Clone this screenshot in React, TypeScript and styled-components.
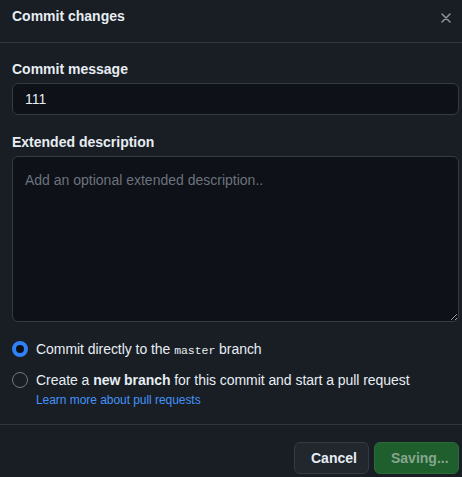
import React from "react";
import styled, { createGlobalStyle } from "styled-components";

const Global = createGlobalStyle`
  html, body { margin: 0; padding: 0; background: #191d24; }
  body { font-family: "Liberation Sans", Arial, sans-serif; color: #e6edf3; }
  * { box-sizing: border-box; }
`;

const Dialog = styled.div`
  width: 462px;
  height: 477px;
  background: #191d24;
  display: flex;
  flex-direction: column;
  overflow: hidden;
`;

const Header = styled.div`
  height: 43px;
  border-bottom: 1px solid #30363d;
  display: flex;
  align-items: flex-start;
  justify-content: space-between;
  padding: 6px 6px 0 12px;
`;

const Title = styled.h1`
  margin: 0;
  font-size: 14px;
  font-weight: 700;
  line-height: 20px;
  color: #e6edf3;
`;

const CloseButton = styled.button`
  width: 20px;
  height: 20px;
  margin-top: 2px;
  border: 0;
  background: transparent;
  padding: 0;
  display: flex;
  align-items: center;
  justify-content: center;
  color: #8d96a0;
`;

const Body = styled.div`
  padding: 16px 3px 0 12px;
  display: flex;
  flex-direction: column;
`;

const Label = styled.label<{ $top?: number }>`
  font-size: 14px;
  font-weight: 700;
  line-height: 20px;
  color: #e6edf3;
  margin-top: ${(p) => p.$top ?? 0}px;
  margin-bottom: 4px;
`;

const Input = styled.input`
  height: 32px;
  width: 100%;
  background: #0e1117;
  border: 1px solid #353b44;
  border-radius: 6px;
  padding: 0 12px;
  font-family: inherit;
  font-size: 14px;
  color: #e6edf3;
  outline: none;
`;

const TextArea = styled.textarea`
  height: 166px;
  width: 100%;
  background: #0e1117;
  border: 1px solid #353b44;
  border-radius: 6px;
  padding: 13px 12px;
  font-family: inherit;
  font-size: 14px;
  line-height: 20px;
  color: #e6edf3;
  outline: none;
  resize: vertical;
  color-scheme: dark;
  &::placeholder { color: #6b737d; }
`;

const Options = styled.div`
  margin-top: 17px;
  display: flex;
  flex-direction: column;
  gap: 9px;
`;

const Option = styled.div`
  display: flex;
  align-items: flex-start;
  gap: 8px;
`;

const Radio = styled.span<{ $checked?: boolean }>`
  width: 16px;
  height: 16px;
  margin-top: 2px;
  flex: none;
  border-radius: 50%;
  border: ${(p) => (p.$checked ? "4px solid #2f81f7" : "1px solid #6e7681")};
  background: ${(p) => (p.$checked ? "#0d1117" : "transparent")};
`;

const OptionText = styled.div`
  display: flex;
  flex-direction: column;
  font-size: 14px;
  line-height: 20px;
  color: #e6edf3;
  letter-spacing: -0.05px;
`;

const Code = styled.code`
  font-family: "Liberation Mono", "DejaVu Sans Mono", monospace;
  font-size: 11.5px;
`;

const Link = styled.a`
  font-size: 12px;
  line-height: 18px;
  color: #4493f8;
  text-decoration: none;
  margin-top: 1px;
`;

const Footer = styled.div`
  margin-top: 15px;
  border-top: 1px solid #30363d;
  padding: 17px 3px 0 12px;
  display: flex;
  justify-content: flex-end;
  gap: 5px;
`;

const Button = styled.button<{ $primary?: boolean }>`
  height: 32px;
  padding: 0 16px;
  border-radius: 6px;
  font-family: inherit;
  font-size: 14px;
  font-weight: 700;
  border: 1px solid ${(p) => (p.$primary ? "#2b6a39" : "#363b43")};
  background: ${(p) => (p.$primary ? "#1f5f2e" : "#22262d")};
  color: ${(p) => (p.$primary ? "#86a68d" : "#e6edf3")};
  width: ${(p) => (p.$primary ? "85px" : "75px")};
`;

export default function App() {
  return (
    <>
      <Global />
      <Dialog>
        <Header>
          <Title>Commit changes</Title>
          <CloseButton aria-label="Close">
            <svg width="10" height="10" viewBox="0 0 10 10">
              <path d="M1 1L9 9M9 1L1 9" stroke="currentColor" strokeWidth="1.5" strokeLinecap="round" />
            </svg>
          </CloseButton>
        </Header>
        <Body>
          <Label>Commit message</Label>
          <Input defaultValue="111" />
          <Label $top={17}>Extended description</Label>
          <TextArea placeholder="Add an optional extended description.." />
          <Options>
            <Option>
              <Radio $checked />
              <OptionText>
                <span>
                  Commit directly to the <Code>master</Code> branch
                </span>
              </OptionText>
            </Option>
            <Option>
              <Radio />
              <OptionText>
                <span>
                  Create a <b>new branch</b> for this commit and start a pull request
                </span>
                <Link href="#">Learn more about pull requests</Link>
              </OptionText>
            </Option>
          </Options>
        </Body>
        <Footer>
          <Button>Cancel</Button>
          <Button $primary>Saving...</Button>
        </Footer>
      </Dialog>
    </>
  );
}
